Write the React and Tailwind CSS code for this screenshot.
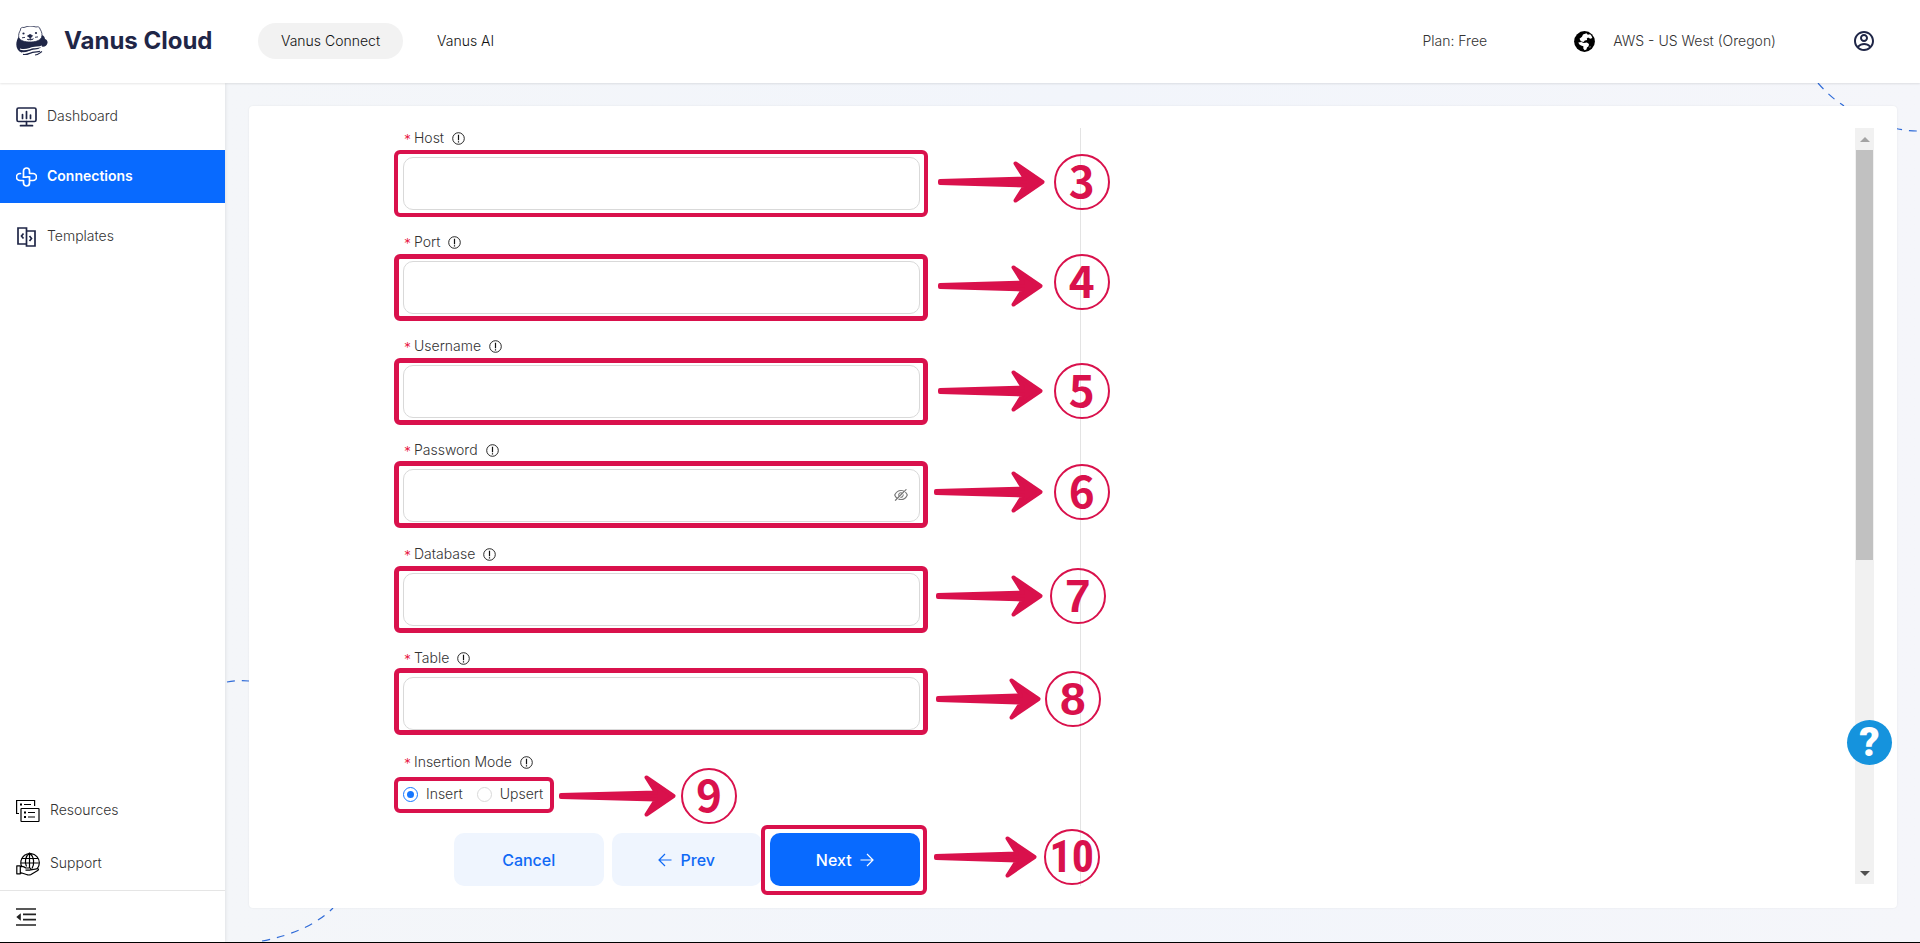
import { AiOutlineEyeInvisible } from "react-icons/ai";
import { RiAccountCircleLine } from "react-icons/ri";

const NAVY = "#1f2647";
const RED = "#d9114c";

function OtterLogo() {
  return (
    <svg viewBox="0 0 32 30" className="h-[30px] w-8 shrink-0" aria-hidden="true">
      <path d="M2.500 11C-1 17-.500 24 5.500 26.500c3 1 6-.5 9-1.500 4-1 8-1 11-4.500 2.500 1 5.500-.5 6-3.500.3-2-.8-3.500-2.500-4-.3-2-1-3.500-3.500-4z" fill={NAVY} />
      <path d="M4.500 4C4 2 6 1 8 1.500c4-1.800 8-1.800 12-.5 2-.7 4 .3 4 2 2 3 2.500 6 1.500 8.500-2 3.500-6.500 4.500-11.500 4.500S4.500 15 2.800 11.500c-.5-2.500.2-5.200 1.700-7.500z" fill="#fff" stroke={NAVY} strokeWidth="0.800" />
      <circle cx="7.500" cy="7.500" r="1.100" fill={NAVY} />
      <circle cx="20" cy="7" r="1.100" fill={NAVY} />
      <path d="M11.500 10l2.500-1.500L16.500 9.700l-2 2.300zM14.200 11.500v3M11 13c1 1 2 1 3 0 1 1 2.500.8 3.500-.3M6 11.800l3-.4M19 11.300l3-.4" fill={NAVY} stroke={NAVY} strokeWidth="0.900" />
      <path d="M4 23c5 2 9-.5 13-1.300s6 0 9-1.700M6 26.800c4 1 6-1 9.500-2s7 0 10.500-2" fill="none" stroke="#fff" strokeWidth="1.300" />
      <path d="M7 28.300c4 1 6-1 9.500-2s5 0 7.500-1M19 29c3 0 4-1.500 7-3.500" fill="none" stroke={NAVY} strokeWidth="1.200" />
    </svg>
  );
}

function GlobeIcon() {
  return (
    <svg viewBox="0 0 21 21" className="h-[21px] w-[21px]" aria-hidden="true">
      <circle cx="10.500" cy="10.500" r="10.400" fill="#000" />
      <path d="M5.500 7.800L8 5.800l1-2.300 3.500-1.200 1.300 1.500 2.200-.6c1.300 1 2 2.300 2.300 3.800l-2 .8-2.200-1.300-1.300 1 .4 1.600-2.400.4-1.300 1.500-2.700-.7z" fill="#fff" />
      <path d="M4.300 11.600l3-.5 2.500 1 3-.5 2.200 1.400-.4 2.200-1.600 1.300-.6 2-1.800.8-1.300-1.800.1-2.200-2.400-.8-1.800-1.200zM15.200 16l1.400-.8-.5 1.600z" fill="#fff" />
    </svg>
  );
}

function DashboardIcon() {
  return (
    <svg viewBox="0 0 21 20" className="h-5 w-[21px]" fill="none" stroke={NAVY} strokeWidth="1.700" aria-hidden="true">
      <rect x="1" y="1" width="19" height="13.500" rx="1.500" />
      <path d="M6.500 7.500v4M10.500 4.500v7M14.500 8v3.500M10.500 14.500V18M4.500 18.700h12" strokeLinecap="round" />
    </svg>
  );
}

function ConnectionsIcon() {
  return (
    <svg viewBox="0 0 21 20" className="h-5 w-[21px]" fill="none" stroke="#fff" strokeWidth="1.700" strokeLinecap="round" strokeLinejoin="round" aria-hidden="true">
      <path d="M7.500 10.200V4a3 3 0 0 1 6 0v2.500H17a3 3 0 0 1 0 7h-2.500" />
      <path d="M13.500 9.800V16a3 3 0 0 1-6 0v-2.500H4a3 3 0 0 1 0-7h.5" />
      <path d="M7.500 10.200h2.500M11 9.800h2.500" />
    </svg>
  );
}

function TemplatesIcon() {
  return (
    <svg viewBox="0 0 21 20" className="h-5 w-[21px]" fill="none" stroke={NAVY} strokeWidth="1.700" aria-hidden="true">
      <path d="M10 17H2V1h8.500v18H19V4h-8.500" />
      <path d="M7.500 6.500L5.500 9l2 2.500M13.500 9l2 2.500-2 2.500" />
    </svg>
  );
}

function ResourcesIcon() {
  return (
    <svg viewBox="0 0 24 24" className="h-6 w-6" fill="none" stroke="#000" strokeWidth="1.200" aria-hidden="true">
      <path d="M3 14.500H.6V1.500h18V7" />
      <rect x="5" y="9.500" width="18" height="13" rx="0.500" />
      <path d="M8 5.500h7M12 13.500h7M12 18h7" />
      <path d="M4 5.500h2M8 13.500h2M8 18h2" strokeWidth="2" />
    </svg>
  );
}

function SupportIcon() {
  return (
    <svg viewBox="0 0 24 24" className="h-6 w-6" fill="none" stroke="#000" strokeWidth="1.200" strokeLinejoin="round" aria-hidden="true">
      <path d="M6 15.500a9.300 9.300 0 1 1 15 1.500" />
      <path d="M10.500 14.500c-2-4-1.500-10 3-13.500 5 4 5 11 2.500 15.500M13.500 1v15M5.500 6.500h16.500M4.800 11h18" />
      <path d="M.8 13.800h3.500v8H.8zM4.300 14.500c3-.8 4 0 5.500 1.500h4c1.500 0 1.500 2.200 0 2.200H9.500M14.500 18l6-1.200c1.800-.4 2.700.8 1.200 1.700L15 22.500c-1.500.8-3 .6-4.500 0l-6.200-2" fill="#fff" />
    </svg>
  );
}

function CollapseIcon() {
  return (
    <svg viewBox="0 0 20 18" className="h-[18px] w-5" fill="none" stroke="#222" strokeWidth="1.700" aria-hidden="true">
      <path d="M0 1h20M7 6.300h13M7 11.700h13M0 17h20" />
      <path d="M4.800 5.200v7.600L.3 9z" fill="#222" stroke="none" />
    </svg>
  );
}

function InfoIcon() {
  return (
    <svg viewBox="0 0 13 13" className="h-[13px] w-[13px]" fill="none" stroke="#111" aria-hidden="true">
      <circle cx="6.500" cy="6.500" r="5.800" strokeWidth="0.900" />
      <path d="M6.500 2.800v5.400M6.500 9.200v1.200" strokeWidth="1.200" />
    </svg>
  );
}

function ThinArrow({ back = false }) {
  return (
    <svg viewBox="0 0 14 14" className="h-[14px] w-[14px]" fill="none" stroke="currentColor" strokeWidth="1.200" aria-hidden="true">
      <path d={back ? "M13.500 7H1M7 1L1 7l6 6" : "M.5 7H13M7 1l6 6-6 6"} />
    </svg>
  );
}

function MarkerArrow({ length, className }) {
  const points = [
    [2, 20],
    [length - 20, 17.5],
    [length - 29.5, 2.5],
    [length - 2.5, 21],
    [length - 29.5, 39.5],
    [length - 20, 24.5],
    [2, 22],
  ];
  return (
    <svg width={length} height="42" className={`pointer-events-none absolute ${className}`} aria-hidden="true">
      <polygon points={points.map((p) => p.join(",")).join(" ")} fill={RED} stroke={RED} strokeWidth="4" strokeLinejoin="round" />
    </svg>
  );
}

function MarkerNumber({ children, className }) {
  return (
    <span className={`pointer-events-none absolute flex h-14 w-14 items-center justify-center rounded-full border-2 border-[#d9114c] leading-none font-bold text-[#d9114c] ${className}`}>
      {children}
    </span>
  );
}

function Frame({ className }) {
  return <span className={`pointer-events-none absolute rounded-md border-[#d9114c] ${className}`} />;
}

const cjk = "pb-[7px] text-[44px] font-['Noto_Sans_CJK_SC',sans-serif]";
const arial = "text-[46px] font-['Liberation_Sans',sans-serif]";

const fields = [
  { id: "host", label: "Host", n: 3, frame: "-top-[7px] border-4", length: 107, arrow: "left-[calc(100%+18px)] top-1", badge: "left-[calc(100%+134px)] -top-[3px] " + cjk },
  { id: "port", label: "Port", n: 4, frame: "-top-[7px] border-[5px]", length: 105, arrow: "left-[calc(100%+18px)] top-1", badge: "left-[calc(100%+134px)] -top-[7px] " + cjk },
  { id: "username", label: "Username", n: 5, frame: "-top-[7px] border-[5px]", length: 105, arrow: "left-[calc(100%+18px)] top-[5px]", badge: "left-[calc(100%+134px)] -top-[2px] " + cjk },
  { id: "password", label: "Password", n: 6, frame: "-top-[8px] border-[5px]", length: 109, arrow: "left-[calc(100%+14px)] top-[2px]", badge: "left-[calc(100%+134px)] -top-[5px] " + cjk },
  { id: "database", label: "Database", n: 7, frame: "-top-[7px] border-[5px]", length: 107, arrow: "left-[calc(100%+16px)] top-[2px]", badge: "left-[calc(100%+130px)] -top-[5px] " + arial },
  { id: "table", label: "Table", n: 8, frame: "-top-[9px] border-[5px]", length: 105, arrow: "left-[calc(100%+16px)] top-px", badge: "left-[calc(100%+125px)] -top-[6px] " + arial },
];

function LabelContent({ children }) {
  return (
    <>
      <span className="w-[10px] pt-1 pl-px text-sm text-[#e8123c]">*</span>
      <span>{children}</span>
      <span className="ml-[7px]"><InfoIcon /></span>
    </>
  );
}

function Field({ field }) {
  const secret = field.id === "password";
  return (
    <div className="mb-[22px]">
      <label htmlFor={field.id} className="mb-[9px] flex h-5 items-center gap-px text-sm font-light text-[#333]">
        <LabelContent>{field.label}</LabelContent>
      </label>
      <div className="relative">
        <input id={field.id} type={secret ? "password" : "text"} className="block h-[53px] w-full rounded-[10px] border border-[#d9d9d9] bg-white px-3 outline-none" />
        {secret && (
          <button type="button" aria-label="Show password" className="absolute top-[18px] right-[11px] text-[#777]">
            <AiOutlineEyeInvisible size={16} />
          </button>
        )}
        <Frame className={`-right-2 -left-[9px] h-[67px] ${field.frame}`} />
        <MarkerArrow length={field.length} className={field.arrow} />
        <MarkerNumber className={field.badge}>{field.n}</MarkerNumber>
      </div>
    </div>
  );
}

function ConnectionForm() {
  return (
    <form className="ml-[16.1%] w-[64%]" onSubmit={(e) => e.preventDefault()}>
      {fields.map((f) => (
        <Field key={f.id} field={f} />
      ))}
      <fieldset>
        <legend className="flex h-5 items-center gap-px text-sm font-light text-[#333]">
          <LabelContent>Insertion Mode</LabelContent>
        </legend>
        <div className="relative mt-3 mb-[29px] flex h-5 w-[143px] items-center gap-[14px] text-sm font-light text-[#333]">
          {["Insert", "Upsert"].map((mode) => (
            <label key={mode} className="flex items-center gap-2">
              <input
                type="radio"
                name="mode"
                defaultChecked={mode === "Insert"}
                className="h-[15px] w-[15px] shrink-0 appearance-none rounded-full border border-[#d9d9d9] bg-white checked:border-[#1677ff] checked:bg-[#1677ff] checked:bg-clip-content checked:p-[3px]"
              />
              {mode}
            </label>
          ))}
          <Frame className="-top-[7px] -right-2 -left-[9px] h-9 border-4" />
          <MarkerArrow length={117} className="top-[-9px] left-[calc(100%+13px)]" />
          <MarkerNumber className={"-top-4 left-[calc(100%+135px)] " + cjk}>9</MarkerNumber>
        </div>
      </fieldset>
      <div className="flex justify-end gap-2 text-base font-medium">
        <button type="button" className="h-[53px] w-[150px] rounded-[10px] bg-[#eff5fe] text-[#0f69f5]">Cancel</button>
        <button type="button" className="flex h-[53px] w-[150px] items-center justify-center gap-2 rounded-[10px] bg-[#eff5fe] text-[#0f69f5]">
          <ThinArrow back />
          Prev
        </button>
        <div className="relative">
          <Frame className="-top-2 -right-[7px] -left-[9px] h-[70px] border-4 bg-white" />
          <button type="submit" className="relative flex h-[53px] w-[150px] items-center justify-center gap-2 rounded-[10px] bg-[#086aff] text-white">
            Next
            <ThinArrow />
          </button>
          <MarkerArrow length={103} className="top-[3px] left-[calc(100%+14px)]" />
          <MarkerNumber className="-top-1 left-[calc(100%+124px)] text-[44px] font-['Roboto_Condensed','Open_Sans_Condensed','Roboto',sans-serif]">10</MarkerNumber>
        </div>
      </div>
    </form>
  );
}

function ScrollRail() {
  return (
    <div className="flex w-[19px] flex-col bg-[#f1f1f1] pl-px">
      <button type="button" aria-label="Scroll up" className="flex h-[22px] items-center justify-center">
        <span className="border-x-[5px] border-b-[5px] border-x-transparent border-b-[#a3a3a3]" />
      </button>
      <div className="mr-px h-[410px] bg-[#c1c1c1]" />
      <button type="button" aria-label="Scroll down" className="mt-auto flex h-[22px] items-center justify-center">
        <span className="border-x-[5px] border-t-[5px] border-x-transparent border-t-[#505050]" />
      </button>
    </div>
  );
}

function Backdrop() {
  const line = { fill: "none", stroke: "#2f6bd8", strokeWidth: 1.2, strokeDasharray: "8 7" };
  return (
    <div className="pointer-events-none absolute inset-0" aria-hidden="true">
      <svg className="absolute top-0 right-0 h-[50px] w-[110px]">
        <path d="M8 0Q20 14 34 23" {...line} />
        <path d="M84 45Q97 48 107 48" {...line} />
      </svg>
      <svg className="absolute top-[594px] left-0 h-3 w-6">
        <path d="M2 5Q12 3 24 4" {...line} />
      </svg>
      <svg className="absolute bottom-0 left-9 h-[34px] w-20">
        <path d="M1 33Q48 24 72 0" {...line} />
      </svg>
    </div>
  );
}

function SideLink({ icon, children, active = false }) {
  return (
    <a
      href="#"
      className={`flex h-[53px] items-center gap-[10px] pl-4 text-sm ${active ? "bg-[#086aff] font-semibold text-white" : "font-light text-[#333]"}`}
    >
      {icon}
      <span className="pb-[2px]">{children}</span>
    </a>
  );
}

export default function App() {
  return (
    <div className="flex min-h-screen flex-col border-b border-black bg-[#f4f6fa] font-['Inter',sans-serif]">
      <header className="relative z-10 flex h-[83px] items-center bg-white pr-11 pb-px pl-4 shadow-[0_1px_2px_rgba(0,0,0,0.100)]">
        <OtterLogo />
        <span className="ml-4 w-[194px] text-2xl font-bold text-[#1f2647]">Vanus Cloud</span>
        <nav className="flex items-center text-sm font-light text-[#111]">
          <a href="#" className="flex h-9 w-[145px] items-center justify-center rounded-full bg-[#f2f2f2]">Vanus Connect</a>
          <a href="#" className="ml-[34px]">Vanus AI</a>
        </nav>
        <div className="ml-auto flex items-center text-sm font-light text-[#333]">
          <span className="mr-[87px]">Plan: Free</span>
          <GlobeIcon />
          <span className="ml-[18px]">AWS - US West (Oregon)</span>
          <button type="button" aria-label="Account" className="ml-[76px] text-[#1f2647]">
            <RiAccountCircleLine size={24} />
          </button>
        </div>
      </header>
      <div className="flex flex-1">
        <aside className="relative z-[5] flex w-[225px] shrink-0 flex-col bg-white pt-[7px] shadow-[1px_0_3px_rgba(0,0,0,0.080)]">
          <nav className="flex flex-col gap-[7px]">
            <SideLink icon={<DashboardIcon />}>Dashboard</SideLink>
            <SideLink icon={<ConnectionsIcon />} active>Connections</SideLink>
            <SideLink icon={<TemplatesIcon />}>Templates</SideLink>
          </nav>
          <nav className="mt-auto flex flex-col">
            <SideLink icon={<ResourcesIcon />}>Resources</SideLink>
            <SideLink icon={<SupportIcon />}>Support</SideLink>
          </nav>
          <div className="flex h-[52px] items-center border-t border-[#e5e5e5] pl-4">
            <button type="button" aria-label="Collapse menu"><CollapseIcon /></button>
          </div>
        </aside>
        <main className="relative flex flex-1 bg-linear-to-r from-[#f4f6f9] via-[#f2f5fb] to-[#f5f6fa] pt-[23px] pr-[23px] pb-[34px] pl-6">
          <Backdrop />
          <section className="relative flex flex-1 rounded-sm bg-white pt-[22px] pr-[23px] pb-6 pl-6 shadow-[0_0_2px_rgba(0,0,0,0.080)]">
            <div className="-mb-[2px] flex flex-1">
              <div className="w-[51.1%] border-r border-[#e3e3e3]">
                <ConnectionForm />
              </div>
            </div>
            <ScrollRail />
          </section>
          <button type="button" className="absolute right-7 bottom-[177px] flex h-[45px] w-[45px] items-center justify-center rounded-full bg-[#1593dd] font-['Roboto',sans-serif] text-[40px] leading-none font-black text-white" aria-label="Help">
            ?
          </button>
        </main>
      </div>
    </div>
  );
}
